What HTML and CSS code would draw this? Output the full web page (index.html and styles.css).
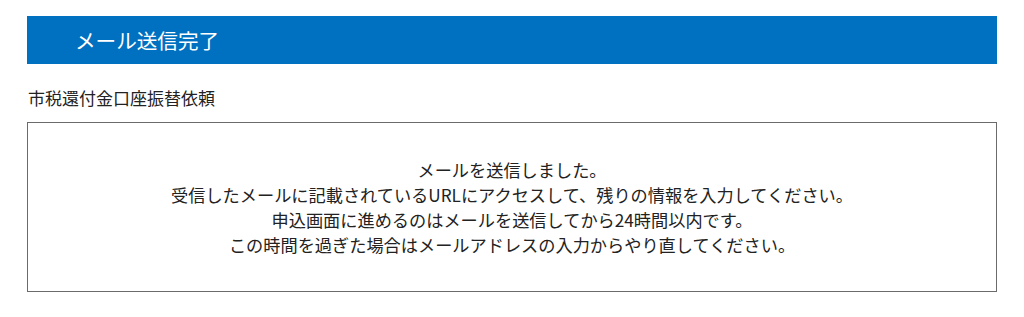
FILE: index.html
```html
<!DOCTYPE html>
<html lang="ja">

<head>
    <meta charset="UTF-8">
    <meta name="viewport" content="width=device-width, initial-scale=1.0">
    <title>メール送信完了</title>
    <link rel="stylesheet" href="styles.css">
</head>

<body>
    <div class="wrapper">
        <header class="page-title">
            <h1>メール送信完了</h1>
        </header>
        <p class="procedure-name">市税還付金口座振替依頼</p>
        <section class="message-box">
            <p>メールを送信しました。</p>
            <p>受信したメールに記載されているURLにアクセスして、残りの情報を入力してください。</p>
            <p>申込画面に進めるのはメールを送信してから24時間以内です。</p>
            <p>この時間を過ぎた場合はメールアドレスの入力からやり直してください。</p>
        </section>
    </div>
</body>

</html>
```

FILE: styles.css
```css
body {
    font-family: "Noto Sans CJK JP", "Noto Sans", sans-serif;
    margin: 0;
    padding: 0;
    background-color: #fff;
    color: #222;
}

.wrapper {
    margin: 16px 27px;
    width: 970px;
}

.page-title {
    background-color: #0070c0;
    height: 48px;
    padding-left: 48px;
}

.page-title h1 {
    margin: 0;
    font-size: 20.6px;
    font-weight: normal;
    line-height: 48px;
    color: #fff;
}

.procedure-name {
    margin: 21px 0 12px 1px;
    font-size: 17px;
    line-height: 25px;
}

.message-box {
    border: 1px solid #6b6b6b;
    padding: 34px 20px 34px;
    text-align: center;
}

.message-box p {
    margin: 0;
    font-size: 17.2px;
    line-height: 25px;
}
```
